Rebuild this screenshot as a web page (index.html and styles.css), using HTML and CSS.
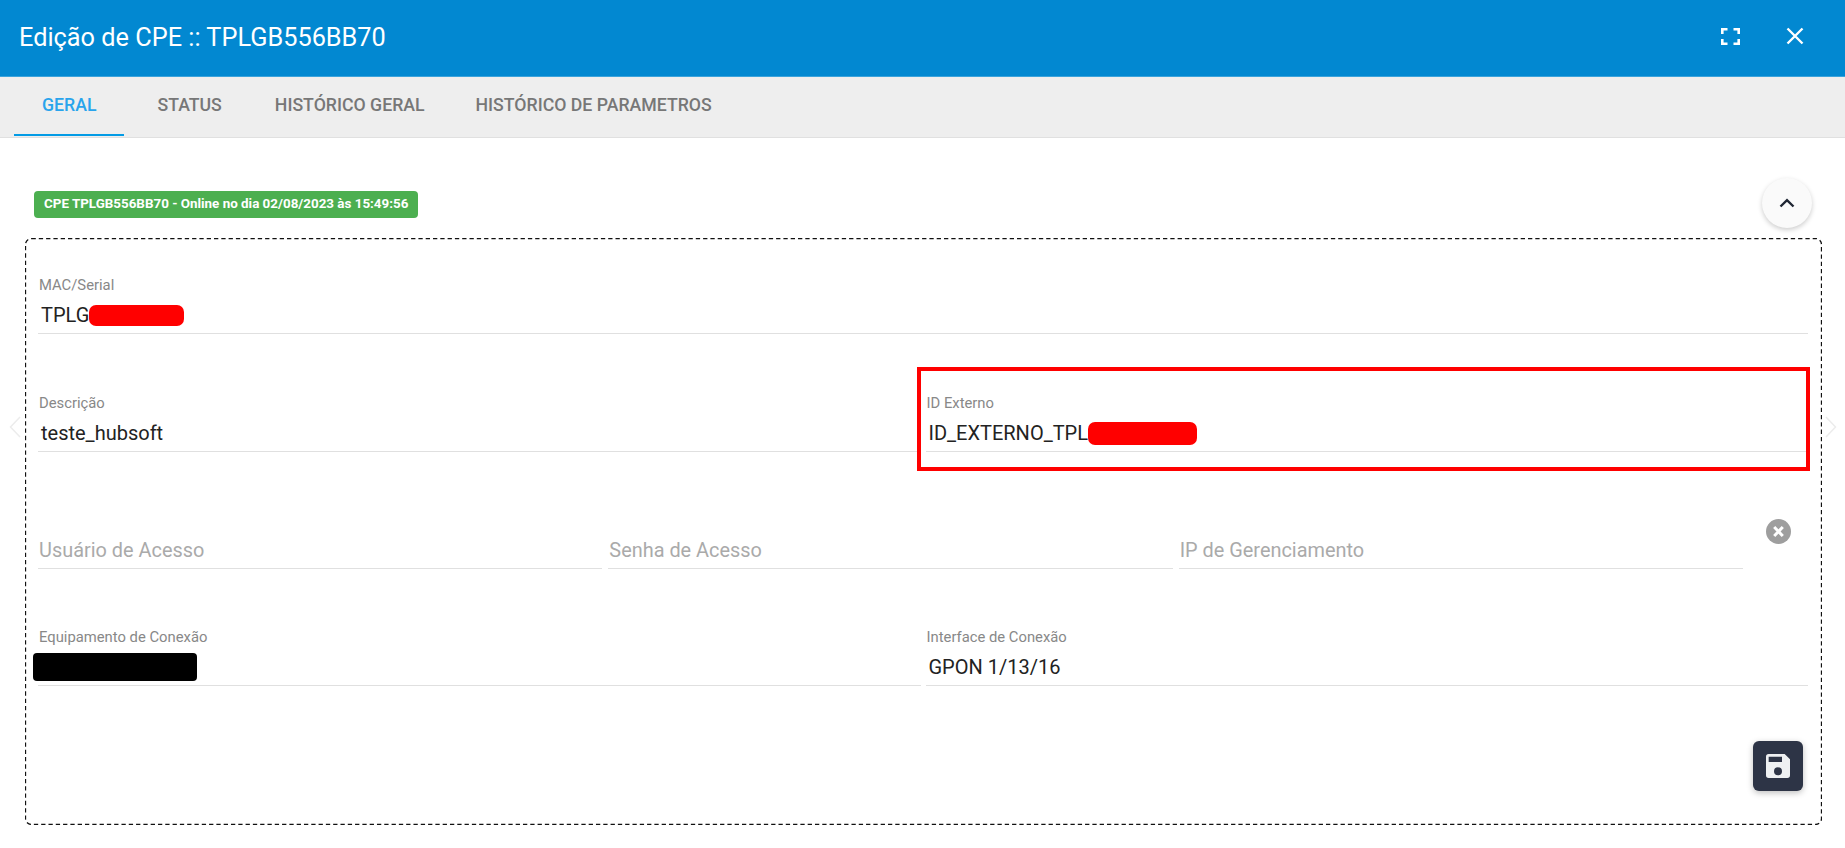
FILE: index.html
```html
<!DOCTYPE html>
<html lang="pt-BR">
<head>
<meta charset="utf-8">
<title>Edição de CPE</title>
<link rel="stylesheet" href="styles.css">
</head>
<body>
<div class="dialog">
  <header class="topbar">
    <h1 class="title">Edição de CPE :: TPLGB556BB70</h1>
    <div class="top-actions">
      <svg class="icon-full" viewBox="0 0 19 17" width="19" height="17"><path d="M1.300 6V1.300H6.500M12.500 1.300h5.200V6M17.700 11v4.700h-5.200M6.500 15.700H1.300V11" fill="none" stroke="#fff" stroke-width="2.600"/></svg>
      <svg class="icon-close" viewBox="0 0 18 18" width="18" height="18"><path d="M1.500 1.500l15 15M16.500 1.500l-15 15" fill="none" stroke="#fff" stroke-width="2.400"/></svg>
    </div>
  </header>
  <nav class="tabs">
    <a class="tab tab-active">Geral</a>
    <a class="tab tab-status">Status</a>
    <a class="tab tab-hist">Histórico Geral</a>
    <a class="tab tab-param">Histórico de Parametros</a>
  </nav>
  <main class="content">
    <div class="status-row">
      <span class="badge">CPE TPLGB556BB70 - Online no dia 02/08/2023 às 15:49:56</span>
      <button class="round-btn" aria-label="Recolher">
        <svg viewBox="0 0 16 10" width="16" height="10"><path d="M1.500 8.500L8 2.200l6.500 6.300" fill="none" stroke="#1f2633" stroke-width="2.400"/></svg>
      </button>
    </div>
    <section class="box">
      <svg class="frame"><rect class="frame-line" x="0.500" y="0.500" rx="6" ry="6"/></svg>
      <svg class="chev chev-left" viewBox="0 0 12 22" width="12" height="22"><path d="M11 1L1.500 11 11 21" fill="none" stroke="#ececec" stroke-width="1.500"/></svg>
      <svg class="chev chev-right" viewBox="0 0 12 22" width="12" height="22"><path d="M1 1l9.500 10L1 21" fill="none" stroke="#ececec" stroke-width="1.500"/></svg>
      <div class="row row-first">
        <div class="field">
          <label class="label">MAC/Serial</label>
          <div class="value">TPLG<span class="blob blob-red blob-mac"></span></div>
        </div>
      </div>
      <div class="row row-two">
        <div class="field">
          <label class="label">Descrição</label>
          <div class="value">teste_hubsoft</div>
        </div>
        <div class="field">
          <label class="label">ID Externo</label>
          <div class="value">ID_EXTERNO_TPL<span class="blob blob-red blob-ext"></span></div>
        </div>
        <div class="highlight"></div>
      </div>
      <div class="row row-three">
        <div class="field"><div class="value placeholder">Usuário de Acesso</div></div>
        <div class="field"><div class="value placeholder">Senha de Acesso</div></div>
        <div class="field"><div class="value placeholder">IP de Gerenciamento</div></div>
        <div class="clear-slot">
          <svg viewBox="0 0 25 25" width="25" height="25"><circle cx="12.500" cy="12.500" r="12.500" fill="#9e9e9e"/><path d="M8.200 8l8.600 9M16.800 8l-8.600 9" stroke="#fff" stroke-width="3" fill="none"/></svg>
        </div>
      </div>
      <div class="row row-two">
        <div class="field">
          <label class="label">Equipamento de Conexão</label>
          <div class="value"><span class="blob blob-black"></span></div>
        </div>
        <div class="field">
          <label class="label">Interface de Conexão</label>
          <div class="value">GPON 1/13/16</div>
        </div>
      </div>
      <div class="footer">
        <button class="save-btn" aria-label="Salvar">
          <svg viewBox="3 3 18 18" width="24" height="24"><path d="M17 3H5a2 2 0 0 0-2 2v14a2 2 0 0 0 2 2h14a2 2 0 0 0 2-2V7l-4-4zm-5 16a3 3 0 1 1 0-6 3 3 0 0 1 0 6zm3-10H5V5h10v4z" fill="#eef0f2"/></svg>
        </button>
      </div>
    </section>
  </main>
</div>
</body>
</html>
```
FILE: styles.css
```css
* { box-sizing: border-box; }
html, body { margin: 0; padding: 0; height: 100%; background: #fff; }
body { font-family: Roboto, "Liberation Sans", sans-serif; overflow: hidden; }

.topbar {
  height: 77px;
  background: #0288d1;
  border-bottom: 1px solid #3aa3dc;
  display: flex;
  align-items: center;
  justify-content: space-between;
  padding: 0 41px 2px 19px;
}
.title { margin: 0; font-size: 25.3px; font-weight: 400; color: #fff; }
.top-actions { display: flex; align-items: center; gap: 46px; padding-bottom: 2px; }
.top-actions svg { display: block; }

.tabs {
  height: 61px;
  background: #eeeeee;
  border-bottom: 1px solid #e0e0e0;
  display: flex;
  padding-left: 14px;
}
.tab {
  height: 60px;
  line-height: 57px;
  font-size: 17.7px;
  font-weight: 500;
  text-transform: uppercase;
  color: #777;
  padding: 0 25px;
}
.tab-active {
  padding: 0 28px;
  color: #29a4ec;
  border-bottom: 2px solid #039be5;
  height: 59px;
}
.tab-status { margin-left: 8px; }
.tab-hist { margin-left: 3px; }
.tab-param { margin-left: 1px; }

.content { padding: 40px 23px 0 25px; }
.status-row { display: flex; justify-content: space-between; align-items: flex-start; height: 60px; padding: 0 10px 0 9px; }
.badge {
  margin-top: 13px;
  height: 27px;
  line-height: 26px;
  padding: 0 10px;
  background: #4caf50;
  border-radius: 4px;
  font-size: 13.4px;
  font-weight: 700;
  color: #fff;
}
.round-btn {
  width: 50px;
  height: 50px;
  border: 0;
  border-radius: 50%;
  background: #fafafa;
  box-shadow: 0 2px 5px rgba(0,0,0,.2);
  display: flex;
  align-items: center;
  justify-content: center;
  padding: 0;
}

.box {
  position: relative;
  border-radius: 6px;
  padding: 36px 14px 33px 13px;
  height: 587px;
}
.frame { position: absolute; left: 0; top: 0; width: 100%; height: 100%; pointer-events: none; }
.frame-line {
  width: calc(100% - 1px);
  height: calc(100% - 1px);
  fill: none;
  stroke: #111;
  stroke-width: 1.3;
  stroke-dasharray: 4.300 3;
}
.row { position: relative; display: flex; gap: 5px; margin-bottom: 57px; }
.row-first { margin-bottom: 58px; }
.row-three { gap: 6px; }
.field { flex: 1 1 0; min-width: 0; border-bottom: 1px solid #e0e0e0; height: 60px; display: flex; flex-direction: column; justify-content: flex-end; }
.label { display: block; height: 20px; font-size: 14.8px; line-height: 22px; color: #888; padding-left: 1px; }
.value { height: 39px; line-height: 43px; font-size: 20px; color: #222; padding-left: 3px; white-space: nowrap; }
.placeholder { color: #aaa; padding-left: 1px; font-size: 19.900px; }
.clear-slot { width: 59px; flex: none; padding: 10px 0 0 17px; }
.clear-slot svg { display: block; }

.blob { display: inline-block; vertical-align: middle; border-radius: 7px; }
.blob-red { background: #ff0000; }
.blob-mac { width: 95px; height: 21px; margin-top: -2px; }
.blob-ext { width: 109px; height: 23px; margin-top: -2px; }
.blob-black { background: #000; width: 164px; height: 28px; border-radius: 4px; margin-left: -8px; margin-top: -4px; }

.highlight {
  position: absolute;
  left: 879px;
  right: -2px;
  top: -25px;
  height: 104px;
  border: 4px solid #ff0000;
  pointer-events: none;
}

.footer { display: flex; justify-content: flex-end; padding-right: 5px; margin-top: -2px; }
.save-btn {
  width: 50px;
  height: 50px;
  border: 0;
  border-radius: 6px;
  background: #2d3446;
  box-shadow: 0 2px 6px rgba(0,0,0,.25);
  display: flex;
  align-items: center;
  justify-content: center;
  padding: 0;
}

.chev { position: absolute; top: 178px; }
.chev-left { left: -16px; }
.chev-right { right: -15px; }
```
